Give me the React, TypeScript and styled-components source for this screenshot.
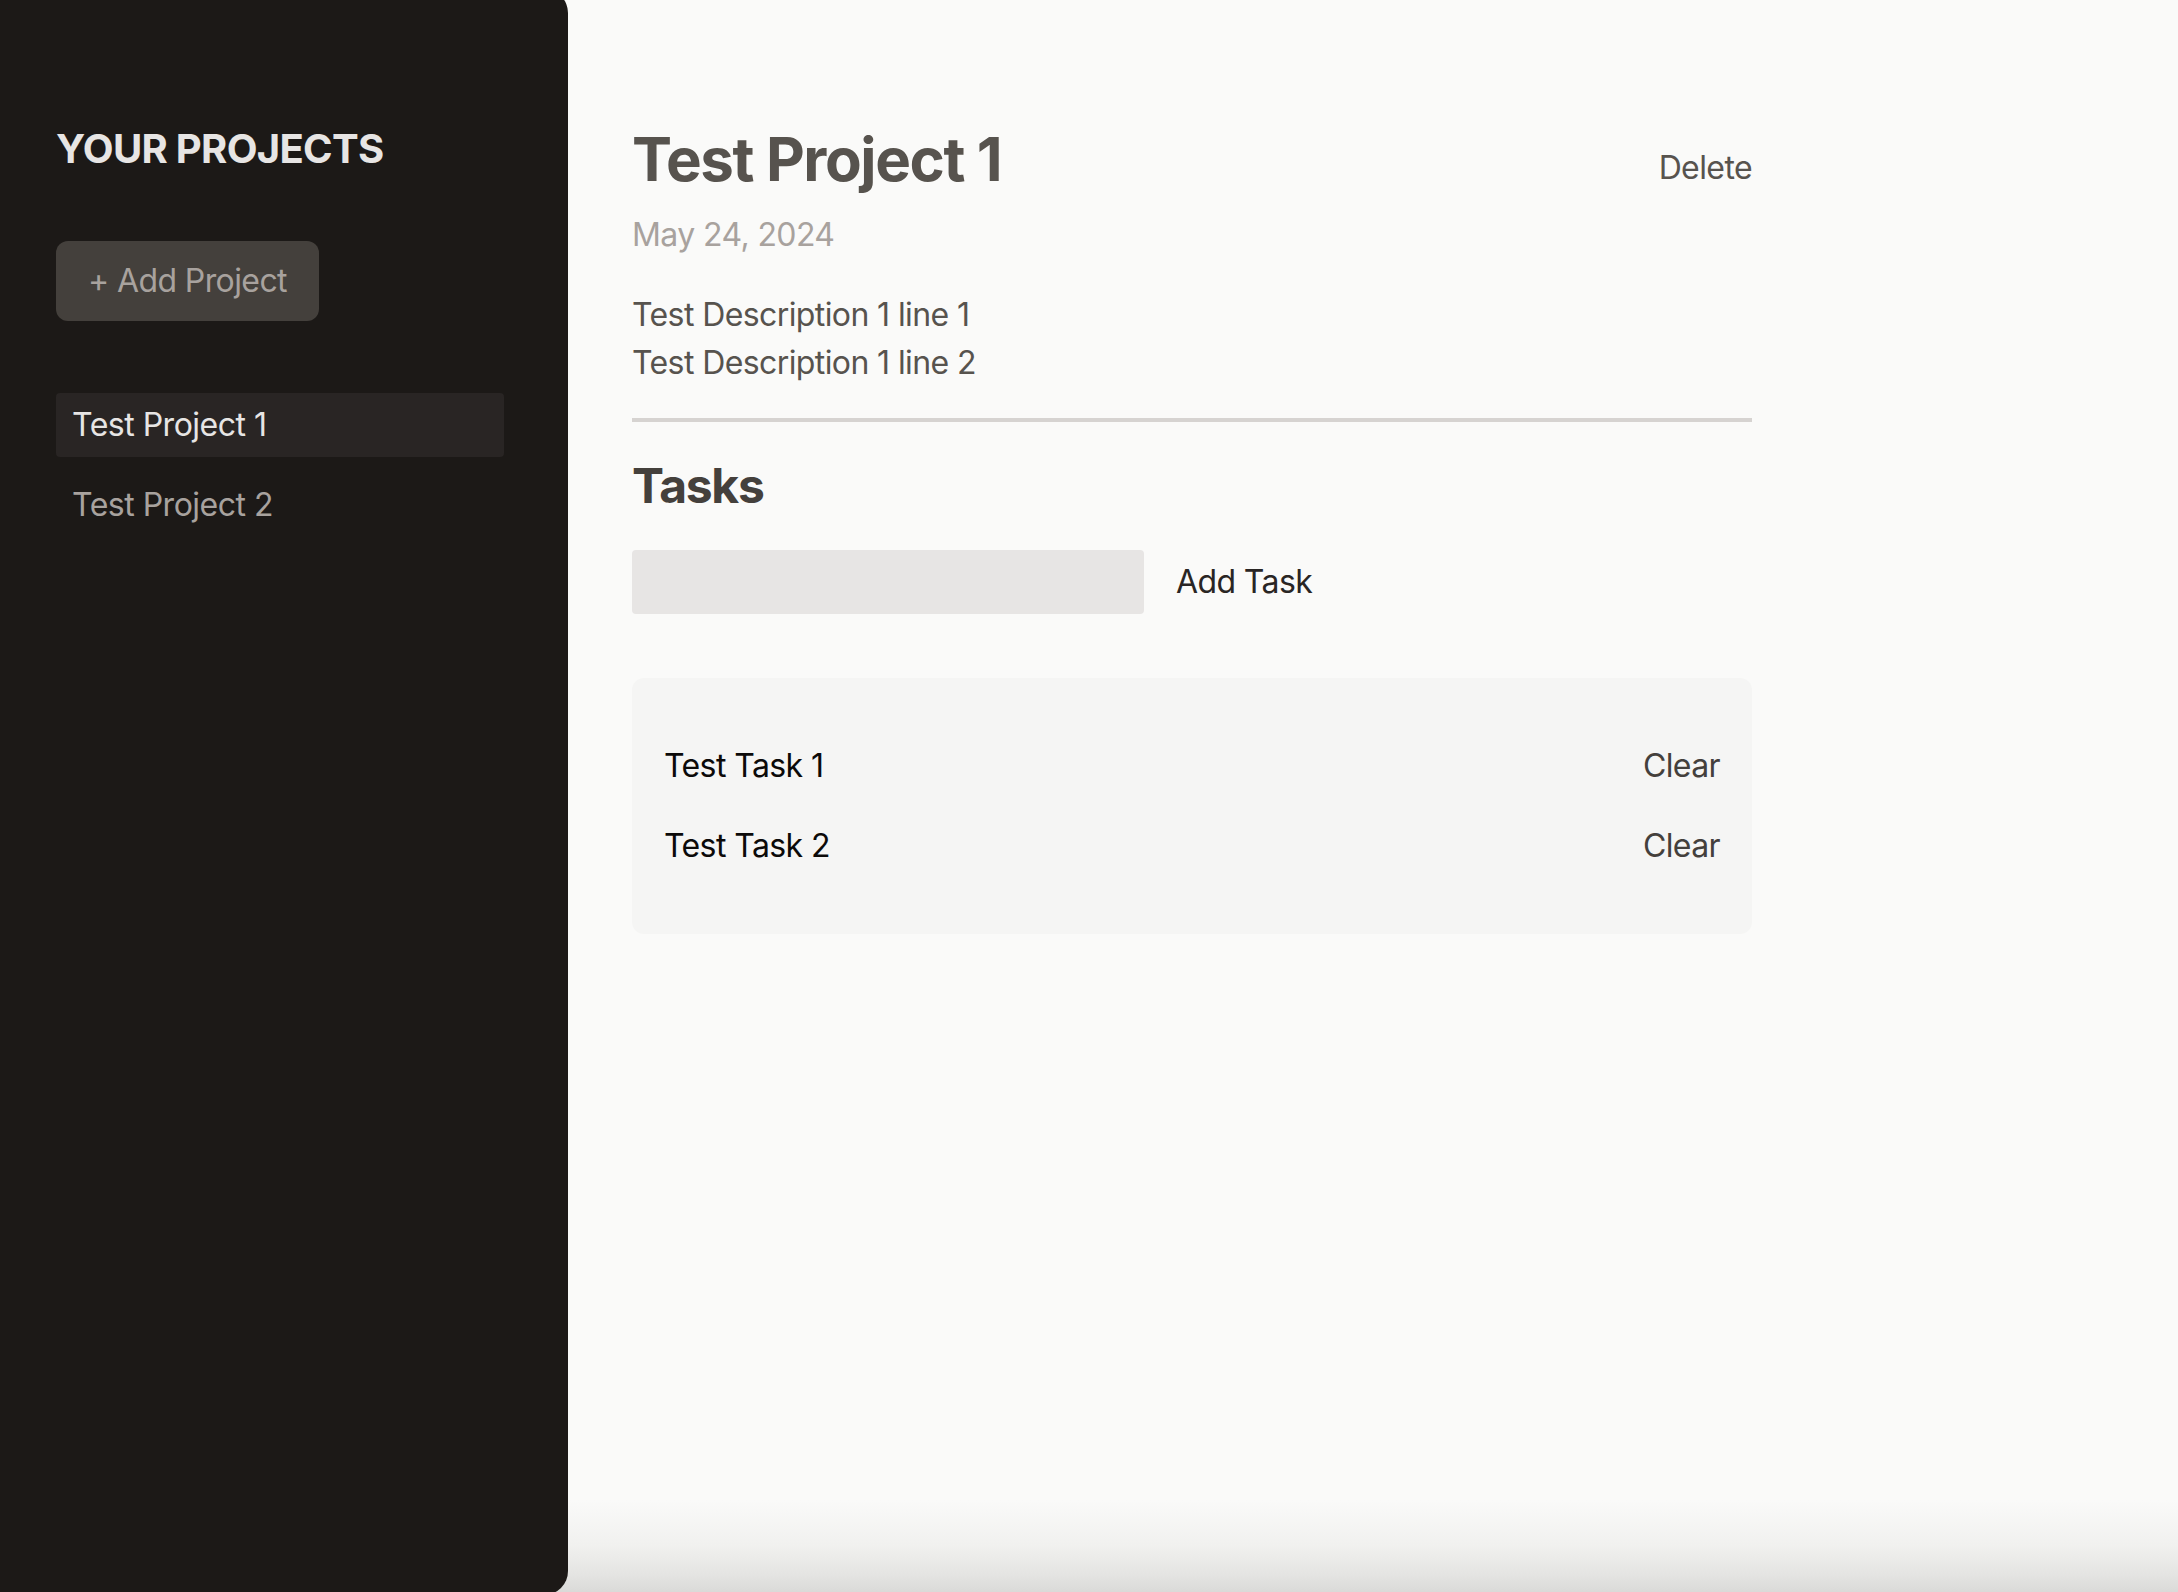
import React from "react";
import styled, { createGlobalStyle } from "styled-components";

const GlobalStyle = createGlobalStyle`
  html, body {
    margin: 0;
    padding: 0;
    overflow: hidden;
  }
  body {
    min-height: 100vh;
    font-family: Inter, "Noto Sans", "Liberation Sans", sans-serif;
    background: linear-gradient(
      to bottom,
      #fafaf9 0,
      #fafaf9 1500px,
      #f1f1ef 1545px,
      #e4e4e2 1575px,
      #dadad8 1592px
    );
  }
  * { box-sizing: border-box; }
`;

const Layout = styled.main`
  display: flex;
  gap: 64px;
  height: 1606px;
  margin: -11px 0 0 -8px;
`;

const Sidebar = styled.aside`
  width: 576px;
  flex-shrink: 0;
  padding: 132px 64px;
  background: #1c1917;
  border-radius: 0 24px 24px 0;
`;

const SidebarTitle = styled.h2`
  margin: 0 0 64px;
  font-size: 40px;
  line-height: 56px;
  font-weight: 700;
  text-transform: uppercase;
  color: #e7e5e4;
  letter-spacing: -0.7px;
`;

const AddProjectButton = styled.button`
  display: inline-block;
  border: none;
  margin: 0;
  padding: 16px 32px;
  font-family: inherit;
  font-size: 32px;
  line-height: 48px;
  color: #a8a29e;
  background: #44403c;
  border-radius: 12px;
  letter-spacing: -0.6px;
  cursor: pointer;
`;

const ProjectList = styled.ul`
  display: flex;
  flex-direction: column;
  list-style: none;
  margin: 64px 0 0;
  padding: 0;
`;

const ProjectItem = styled.li``;

const ProjectButton = styled.button<{ $active?: boolean }>`
  display: block;
  width: 100%;
  text-align: left;
  border: none;
  margin: 8px 0;
  padding: 8px 16px;
  font-family: inherit;
  font-size: 32px;
  line-height: 48px;
  letter-spacing: -0.5px;
  border-radius: 4px;
  color: ${(p) => (p.$active ? "#e7e5e4" : "#a8a29e")};
  background: ${(p) => (p.$active ? "#292524" : "transparent")};
  cursor: pointer;
`;

const Content = styled.div`
  width: 1120px;
  margin-top: 134px;
`;

const Header = styled.header`
  padding-bottom: 31px;
  margin-bottom: 32px;
  border-bottom: 4px solid #d6d3d1;
`;

const TitleRow = styled.div`
  display: flex;
  align-items: center;
  justify-content: space-between;
`;

const Title = styled.h1`
  margin: 0 0 16px;
  font-size: 60px;
  line-height: 72px;
  font-weight: 700;
  color: #57534e;
  letter-spacing: -1.4px;
`;

const TextButton = styled.button<{ $tone?: string }>`
  border: none;
  background: none;
  padding: 0;
  font-family: inherit;
  font-size: 32px;
  line-height: 48px;
  letter-spacing: -0.6px;
  color: ${(p) => p.$tone || "#57534e"};
  cursor: pointer;
`;

const DeleteButton = styled(TextButton)`
  margin-top: 2px;
`;

const DateText = styled.p`
  margin: 0 0 32px;
  font-size: 32px;
  line-height: 48px;
  color: #a8a29e;
  letter-spacing: -0.6px;
`;

const Description = styled.p`
  margin: 0;
  font-size: 32px;
  line-height: 48px;
  color: #57534e;
  white-space: pre-wrap;
  letter-spacing: -0.6px;
`;

const SectionTitle = styled.h2`
  margin: 0 0 32px;
  font-size: 48px;
  line-height: 64px;
  font-weight: 700;
  color: #44403c;
  letter-spacing: -1.3px;
`;

const NewTaskRow = styled.div`
  display: flex;
  align-items: center;
  gap: 32px;
`;

const TaskInput = styled.input`
  width: 512px;
  height: 64px;
  padding: 8px 16px;
  border: none;
  border-radius: 4px;
  background: #e7e5e4;
  font-family: inherit;
  font-size: 32px;
  outline: none;
`;

const TaskList = styled.ul`
  list-style: none;
  margin: 64px 0 0;
  padding: 32px;
  border-radius: 12px;
  background: #f5f5f4;
`;

const TaskRow = styled.li`
  display: flex;
  justify-content: space-between;
  margin: 32px 0;
  font-size: 32px;
  line-height: 48px;
  color: #0c0a09;
  letter-spacing: -0.6px;
`;

const projects = [
  { id: 1, title: "Test Project 1" },
  { id: 2, title: "Test Project 2" },
];

const tasks = ["Test Task 1", "Test Task 2"];

export default function App() {
  return (
    <>
      <GlobalStyle />
      <Layout>
        <Sidebar>
          <SidebarTitle>Your Projects</SidebarTitle>
          <AddProjectButton>+ Add Project</AddProjectButton>
          <ProjectList>
            {projects.map((p, i) => (
              <ProjectItem key={p.id}>
                <ProjectButton $active={i === 0}>{p.title}</ProjectButton>
              </ProjectItem>
            ))}
          </ProjectList>
        </Sidebar>
        <Content>
          <Header>
            <TitleRow>
              <Title>Test Project 1</Title>
              <DeleteButton>Delete</DeleteButton>
            </TitleRow>
            <DateText>May 24, 2024</DateText>
            <Description>{"Test Description 1 line 1\nTest Description 1 line 2"}</Description>
          </Header>
          <section>
            <SectionTitle>Tasks</SectionTitle>
            <NewTaskRow>
              <TaskInput type="text" />
              <TextButton $tone="#292524">Add Task</TextButton>
            </NewTaskRow>
            <TaskList>
              {tasks.map((t) => (
                <TaskRow key={t}>
                  <span>{t}</span>
                  <TextButton $tone="#44403c">Clear</TextButton>
                </TaskRow>
              ))}
            </TaskList>
          </section>
        </Content>
      </Layout>
    </>
  );
}
